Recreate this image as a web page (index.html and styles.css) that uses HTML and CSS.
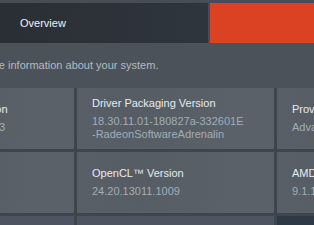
FILE: index.html
```html
<!DOCTYPE html>
<html lang="en">
<head>
    <meta charset="UTF-8">
    <title>System</title>
    <link rel="stylesheet" href="styles.css">
</head>
<body>
    <!-- Tab strip -->
    <div class="tabs">
        <div class="tab">Overview</div>
        <div class="tab tab-accent"></div>
    </div>

    <div class="page">
        <div class="description">View the information about your system.</div>

        <div class="card-grid">
            <div class="card">
                <div class="card-title">Radeon ReLive Version</div>
                <div class="card-value">Adrenalin 2019 v18.9.3</div>
            </div>
            <div class="card">
                <div class="card-title">Driver Packaging Version</div>
                <div class="card-value">18.30.11.01-180827a-332601E<br>-RadeonSoftwareAdrenalin</div>
            </div>
            <div class="card">
                <div class="card-title">Provider</div>
                <div class="card-value">Advanced Micro Devices, Inc.</div>
            </div>

            <div class="card">
                <div class="card-title">2D Driver</div>
                <div class="card-value">8.1.1.1634</div>
            </div>
            <div class="card">
                <div class="card-title">OpenCL™ Version</div>
                <div class="card-value">24.20.13011.1009</div>
            </div>
            <div class="card">
                <div class="card-title">AMD Audio Driver Version</div>
                <div class="card-value">9.1.1.0000</div>
            </div>

            <div class="card card-muted"></div>
            <div class="card card-muted"></div>
            <div class="card card-dark"></div>
        </div>
    </div>
</body>
</html>
```

FILE: styles.css
```css
body, html {
    margin: 0;
    height: 100%;
    overflow: hidden;
    background-color: #4b525a;
    font-family: "Liberation Sans", Arial, sans-serif;
    font-size: 11px;
}

/* Tab strip */
.tabs {
    display: flex;
    gap: 2px;
    height: 40px;
    border-top: 3px solid #474d54;
    background-color: #474d54;
}

.tab {
    width: 188px;
    padding-left: 20px;
    line-height: 40px;
    color: #eef3f8;
    background: linear-gradient(to right, #2a2f35, #2f353c);
}

.tab-accent {
    flex: 1;
    padding: 0;
    background: #db4224;
}

/* Page content, scrolled to the right */
.page {
    margin-left: -123px;
}

.description {
    padding: 15px 0 0 86px;
    height: 30px;
    line-height: 14px;
    color: #b4bac0;
}

.card-grid {
    display: grid;
    grid-template-columns: repeat(3, 197px);
    grid-auto-rows: 61px;
    gap: 3px;
    background-color: #3f454c;
}

.card {
    display: flex;
    flex-direction: column;
    justify-content: center;
    padding-left: 15px;
    background: radial-gradient(circle at 30% 40%, #555c64, #5b6169 70%);
    white-space: nowrap;
    overflow: hidden;
}

.card-title {
    line-height: 13px;
    margin-bottom: 5px;
    color: #e6ebf0;
}

.card-value {
    line-height: 12.5px;
    color: #a2adb8;
}

.card-muted {
    background: #4c5561;
}

.card-dark {
    background: #2e3948;
}
```
